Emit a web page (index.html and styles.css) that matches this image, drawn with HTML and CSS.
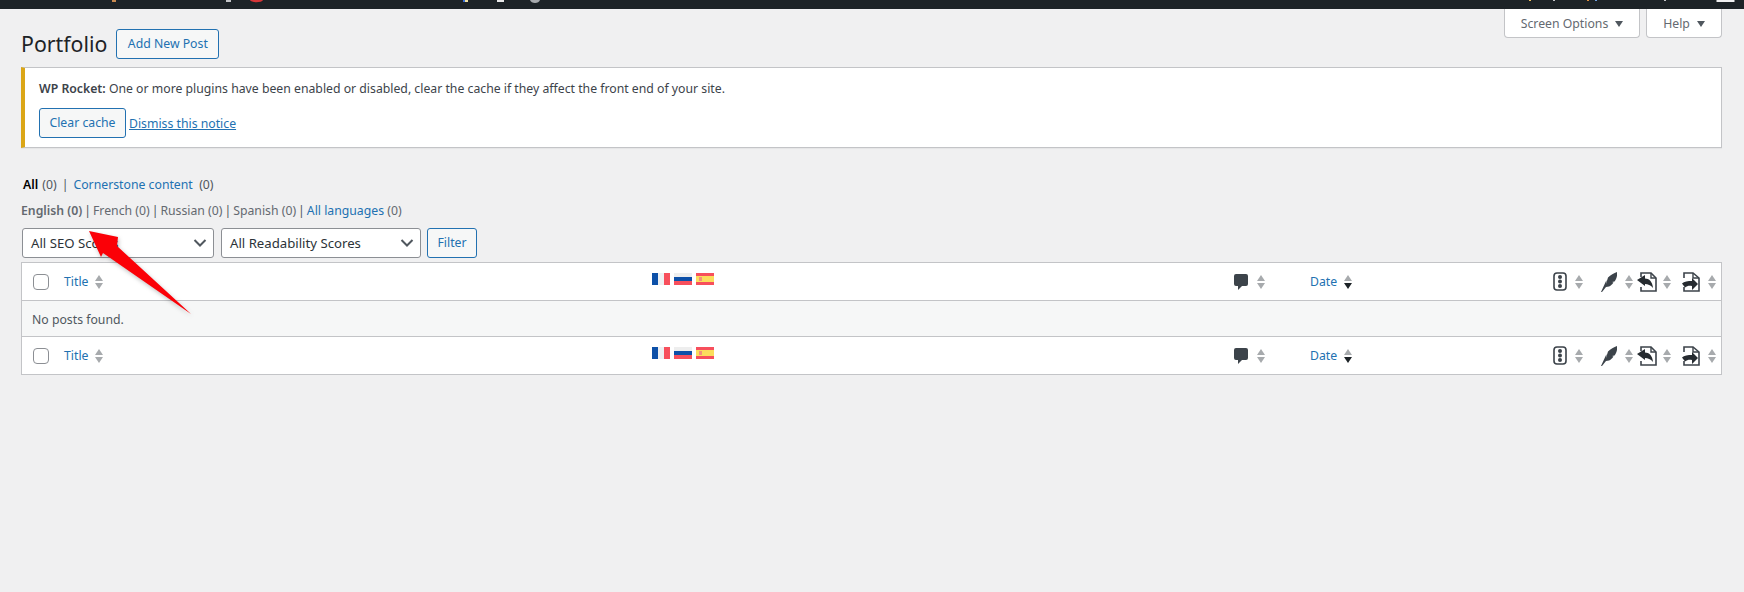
FILE: index.html
```html
<!DOCTYPE html>
<html lang="en">
<head>
<meta charset="utf-8">
<title>Portfolio</title>
<link rel="stylesheet" href="styles.css">
</head>
<body>
<svg class="sprites" aria-hidden="true">
  <symbol id="sort" viewBox="0 0 8 14"><path d="M4 0l4 6H0z" fill="#a7aaad"/><path d="M0 8h8l-4 6z" fill="#a7aaad"/></symbol>
  <symbol id="sort-desc" viewBox="0 0 8 14"><path d="M4 0l4 6H0z" fill="#a7aaad"/><path d="M0 8h8l-4 6z" fill="#1d2327"/></symbol>
  <symbol id="fr" viewBox="0 0 18 12"><rect width="6" height="12" fill="#0d50a8"/><rect x="6" width="6" height="12" fill="#eef0f2"/><rect x="12" width="6" height="12" fill="#f74f5c"/></symbol>
  <symbol id="ru" viewBox="0 0 18 12"><rect width="18" height="4" fill="#eeeeee"/><rect y="4" width="18" height="4" fill="#0d50a8"/><rect y="8" width="18" height="4" fill="#f74f5c"/></symbol>
  <symbol id="es" viewBox="0 0 18 12"><rect width="18" height="12" fill="#f74f5c"/><rect y="3" width="18" height="6" fill="#fbdd5c"/><rect x="3" y="4" width="3" height="4" fill="#f4907c"/></symbol>
  <symbol id="comment" viewBox="0 0 14 16"><path d="M2 0h10a2 2 0 0 1 2 2v8a2 2 0 0 1-2 2H8l-4 4v-4H2a2 2 0 0 1-2-2V2a2 2 0 0 1 2-2z" fill="#3c434a"/></symbol>
  <symbol id="light" viewBox="0 0 14 19"><rect x="1" y="1" width="12" height="17" rx="3" fill="#fff" stroke="#3c434a" stroke-width="1.6"/><circle cx="7" cy="5" r="2" fill="#3c434a"/><circle cx="7" cy="9.500" r="2" fill="#3c434a"/><circle cx="7" cy="14" r="2" fill="#3c434a"/></symbol>
  <symbol id="feather" viewBox="0 0 16 20"><path d="M16 0c.5 4-.5 7-2.500 9.500l-2.500.5 1.500.5c-1.500 2-3 3.500-4.500 4l-3 .5L1 20H0l3-6.500L5.500 8l-.5 4 2-6.500C9.500 3 13 1 16 0z" fill="#3c434a"/></symbol>
  <symbol id="doc-in" viewBox="0 0 20 20"><path d="M4 5V1h10l5 5v13H4v-4" fill="#fff" stroke="#3c434a" stroke-width="1.6"/><path d="M14 1v5h5" fill="none" stroke="#3c434a" stroke-width="1.4"/><path d="M0 8L8 3v3.500c4 0 7.500 3 8 9.500-2.500-3-5-4-8-4V14z" fill="#262b30"/></symbol>
  <symbol id="doc-out" viewBox="0 0 18 20"><path d="M2 6V1h9l6 5v13H2v-4" fill="#fff" stroke="#3c434a" stroke-width="1.6"/><path d="M11 1v5h6" fill="none" stroke="#3c434a" stroke-width="1.4"/><path d="M16 12l-6-6v3C6 9 2 9.500 0 11.500l3 4c2-1.500 4-2 7-1.500v4z" fill="#262b30"/></symbol>
</svg>
<div class="adminbar">
  <svg class="bar-bits" viewBox="0 0 1744 9"><rect x="112" width="4" height="2" fill="#c98a50"/><rect x="226" width="5" height="2" fill="#c3c4c7"/><path d="M250 0h13c-1 3-12 3-13 0z" fill="#d63638"/><rect x="463" width="2" height="2" fill="#3a6fd8"/><rect x="465" width="3" height="2" fill="#f0e0a0"/><rect x="497" width="7" height="2" fill="#e8e8e8"/><path d="M530 0h10c-1 4-9 4-10 0z" fill="#a7aaad"/><rect x="1529" width="2" height="1" fill="#f0c060"/><rect x="1553" width="2" height="1" fill="#c3c4c7"/><rect x="1587" width="2" height="1" fill="#e09040"/><rect x="1595" width="2" height="1" fill="#70a0e0"/><rect x="1664" width="2" height="1" fill="#c3c4c7"/><rect x="1716.500" y="0" width="18" height="2" fill="#f0f0f1"/></svg>
</div>
<div class="tabs">
  <button class="tab tab-wide">Screen Options <i class="caret"></i></button>
  <button class="tab tab-help">Help <i class="caret"></i></button>
</div>
<main class="wrap">
  <div class="heading">
    <h1>Portfolio</h1>
    <a class="btn add">Add New Post</a>
  </div>
  <div class="notice">
    <p><strong>WP Rocket:</strong> One or more plugins have been enabled or disabled, clear the cache if they affect the front end of your site.</p>
    <div class="notice-actions"><a class="btn">Clear cache</a> <a class="dismiss">Dismiss this notice</a></div>
  </div>
  <ul class="views">
    <li><b class="current">All</b> <span class="count">(0)</span></li>
    <li class="sep">|</li>
    <li><a>Cornerstone content</a> <span class="count">&nbsp;(0)</span></li>
  </ul>
  <ul class="langs">
    <li><b>English (0)</b></li><li class="sep">|</li>
    <li>French (0)</li><li class="sep">|</li>
    <li>Russian (0)</li><li class="sep">|</li>
    <li>Spanish (0)</li><li class="sep">|</li>
    <li><a>All languages</a> (0)</li>
  </ul>
  <div class="filters">
    <div class="select seo">All SEO Scores<svg class="chev" viewBox="0 0 16 16"><path d="M2.500 5l5.500 5.500L13.500 5" fill="none" stroke="#50575e" stroke-width="2"/></svg></div>
    <div class="select read">All Readability Scores<svg class="chev" viewBox="0 0 16 16"><path d="M2.500 5l5.500 5.500L13.500 5" fill="none" stroke="#50575e" stroke-width="2"/></svg></div>
    <a class="btn filter">Filter</a>
  </div>
  <div class="table">
    <div class="row head">
      <span class="cb"></span>
      <span><a>Title</a><svg class="sort"><use href="#sort"/></svg></span>
      <span class="c-flags"><svg class="flag"><use href="#fr"/></svg><svg class="flag"><use href="#ru"/></svg><svg class="flag"><use href="#es"/></svg></span>
      <span><svg class="ico-comment"><use href="#comment"/></svg><svg class="sort"><use href="#sort"/></svg></span>
      <span><a>Date</a><svg class="sort"><use href="#sort-desc"/></svg></span>
      <span><svg class="ico-light"><use href="#light"/></svg><svg class="sort"><use href="#sort"/></svg></span>
      <span><svg class="ico-feather"><use href="#feather"/></svg><svg class="sort"><use href="#sort"/></svg></span>
      <span><svg class="ico-doc"><use href="#doc-in"/></svg><svg class="sort"><use href="#sort"/></svg></span>
      <span><svg class="ico-doc2"><use href="#doc-out"/></svg><svg class="sort"><use href="#sort"/></svg></span>
    </div>
    <div class="row empty">No posts found.</div>
    <div class="row foot">
      <span class="cb"></span>
      <span><a>Title</a><svg class="sort"><use href="#sort"/></svg></span>
      <span class="c-flags"><svg class="flag"><use href="#fr"/></svg><svg class="flag"><use href="#ru"/></svg><svg class="flag"><use href="#es"/></svg></span>
      <span><svg class="ico-comment"><use href="#comment"/></svg><svg class="sort"><use href="#sort"/></svg></span>
      <span><a>Date</a><svg class="sort"><use href="#sort-desc"/></svg></span>
      <span><svg class="ico-light"><use href="#light"/></svg><svg class="sort"><use href="#sort"/></svg></span>
      <span><svg class="ico-feather"><use href="#feather"/></svg><svg class="sort"><use href="#sort"/></svg></span>
      <span><svg class="ico-doc"><use href="#doc-in"/></svg><svg class="sort"><use href="#sort"/></svg></span>
      <span><svg class="ico-doc2"><use href="#doc-out"/></svg><svg class="sort"><use href="#sort"/></svg></span>
    </div>
  </div>
</main>
<svg class="arrow" viewBox="0 0 1744 592"><polygon points="89,231 118,237 117,246 191,314 103,253 101,257" fill="#fb0007"/></svg>
</body>
</html>
```
FILE: styles.css
```css
* { box-sizing: border-box; }
html, body { margin: 0; padding: 0; }
body {
  position: relative;
  width: 1744px;
  height: 592px;
  overflow: hidden;
  background: #f0f0f1;
  color: #3c434a;
  font-family: "Noto Sans", "Open Sans", sans-serif;
  font-size: 12.25px;
  line-height: 18px;
}
a { color: #2271b1; }
ul { list-style: none; margin: 0; padding: 0; }
.sprites { position: absolute; width: 0; height: 0; }

.adminbar { height: 9px; background: #1d2327; }
.bar-bits { display: block; width: 1744px; height: 9px; }

.tabs {
  display: flex;
  justify-content: flex-end;
  gap: 6px;
  padding-right: 22px;
  height: 0;
}
.tab {
  display: flex;
  align-items: center;
  justify-content: center;
  gap: 7px;
  height: 29px;
  padding: 1px 0 0;
  border: 1px solid #c3c4c7;
  border-top: 0;
  border-radius: 0 0 4px 4px;
  background: #fff;
  color: #646970;
  font: inherit;
}
.tab-wide { width: 136px; }
.tab-help { width: 76px; }
.caret {
  width: 0;
  height: 0;
  border-left: 4px solid transparent;
  border-right: 4px solid transparent;
  border-top: 6px solid #50575e;
}

.wrap { padding: 20px 22px 0 21px; }

.heading {
  display: flex;
  align-items: center;
  gap: 9px;
  height: 30px;
}
h1 {
  margin: 0;
  font-weight: 400;
  font-size: 21.3px;
  line-height: 30px;
  color: #1d2327;
}
.btn {
  display: inline-flex;
  align-items: center;
  justify-content: center;
  height: 30px;
  border: 1px solid #2271b1;
  border-radius: 3px;
  background: #f6f7f7;
  color: #2271b1;
}
.add { width: 103px; }

.notice {
  height: 81px;
  margin: 8px 0 0;
  padding: 2px 0 0 14px;
  background: #fff;
  border: 1px solid #c3c4c7;
  border-left: 4px solid #dba617;
  box-shadow: 0 1px 1px rgba(0,0,0,.04);
}
.notice p { margin: 10px 0 0; color: #3c434a; }
.notice strong { font-weight: 600; }
.notice-actions { display: flex; align-items: center; gap: 3px; margin-top: 10px; }
.notice-actions .btn { width: 87px; }
.dismiss { text-decoration: underline; margin-top: 2px; }

.views { display: flex; gap: 5px; margin: 28px 0 0 2px; height: 18px; }
.views .current { font-weight: 600; color: #000; margin-right: 1px; }
.count, .sep { color: #50575e; }
.langs { display: flex; gap: 2px; margin-top: 8px; height: 18px; color: #646970; }
.langs b { font-weight: 600; }

.filters { display: flex; align-items: center; gap: 7px; margin: 8px 0 0 1px; }
.select {
  display: flex;
  align-items: center;
  justify-content: space-between;
  height: 30px;
  padding: 0 5px 0 8px;
  background: #fff;
  border: 1px solid #8c8f94;
  border-radius: 3px;
  color: #2c3338;
  font-size: 13.2px;
}
.seo { width: 192px; }
.read { width: 200px; }
.chev { width: 16px; height: 16px; }
.filter { width: 50px; margin-left: -1px; }

.table {
  margin-top: 4px;
  border: 1px solid #c3c4c7;
  background: #fff;
}
.row {
  display: grid;
  grid-template-columns: 42px 588px 582px 76px 243px 48px 36px 45px 1fr;
  align-items: center;
}
.head { height: 38px; border-bottom: 1px solid #c3c4c7; }
.foot { height: 38px; border-top: 1px solid #c3c4c7; }
.empty { display: block; height: 35px; padding: 10px 10px 0; background: #f6f7f7; color: #50575e; }

.cb {
  width: 16px;
  height: 16px;
  margin-left: 11px;
  border: 1px solid #8c8f94;
  border-radius: 4px;
  background: #fff;
}
.row > span { display: flex; align-items: center; }
.row a { margin-right: 7px; }
.sort { width: 8px; height: 14px; flex: none; }
.c-flags { gap: 4px; margin-top: -6px; }
.flag { width: 18px; height: 12px; }
.ico-comment { width: 14px; height: 16px; margin-right: 9px; }
.ico-light { width: 14px; height: 19px; margin-right: 8px; }
.ico-feather { width: 16px; height: 20px; margin-right: 8px; }
.ico-doc { width: 20px; height: 20px; margin-right: 6px; }
.ico-doc2 { width: 18px; height: 20px; margin-right: 8px; }

.arrow {
  position: absolute;
  left: 0;
  top: 0;
  width: 1744px;
  height: 592px;
  pointer-events: none;
  filter: drop-shadow(1px 2px 2px rgba(0,0,0,.25));
}
```
